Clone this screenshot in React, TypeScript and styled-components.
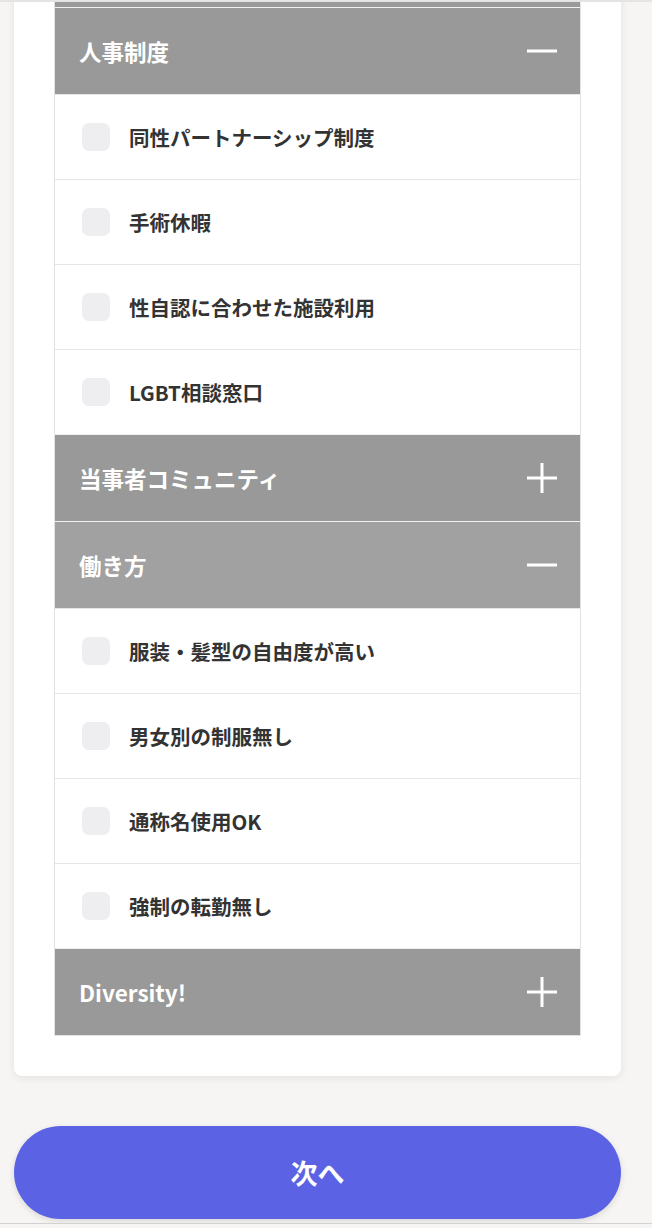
import React, {FC, useState} from 'react';
import styled, {createGlobalStyle} from 'styled-components';

interface ICategory {
    id: string
    title: string
    items: string[]
    open: boolean
    active?: boolean
}

// the first category sits above the scrolled viewport, only its bottom edge shows
const categories: ICategory[] = [
    {id: 'previous', title: '', items: [], open: false},
    {
        id: 'hr',
        title: '人事制度',
        items: ['同性パートナーシップ制度', '手術休暇', '性自認に合わせた施設利用', 'LGBT相談窓口'],
        open: true
    },
    {id: 'community', title: '当事者コミュニティ', items: [], open: false},
    {
        id: 'work',
        title: '働き方',
        items: ['服装・髪型の自由度が高い', '男女別の制服無し', '通称名使用OK', '強制の転勤無し'],
        open: true,
        active: true
    },
    {id: 'diversity', title: 'Diversity!', items: [], open: false},
]

const GlobalStyle = createGlobalStyle`
  body {
    margin: 0;
    background: #f6f5f3;
    font-family: "Noto Sans CJK JP", "Noto Sans", sans-serif;
  }
`

const ToggleIcon: FC<{ open: boolean }> = ({open}) => (
    <svg width="30" height="30" viewBox="0 0 30 30">
        <line x1="0" y1="15" x2="30" y2="15" stroke="#fff" strokeWidth="3"/>
        {!open && <line x1="15" y1="0" x2="15" y2="30" stroke="#fff" strokeWidth="3"/>}
    </svg>
)

const Category: FC<{ category: ICategory }> = ({category}) => {
    const [checked, setChecked] = useState<string[]>([])

    const toggle = (item: string) => {
        setChecked(prev => prev.includes(item) ? prev.filter(el => el !== item) : [...prev, item])
    }

    return (
        <>
            <Header active={!!category.active}>
                <HeaderTitle>{category.title}</HeaderTitle>
                <ToggleIcon open={category.open}/>
            </Header>
            {category.open && category.items.map(item => (
                <Row key={item} onClick={() => toggle(item)}>
                    <Check checked={checked.includes(item)}/>
                    <Label>{item}</Label>
                </Row>
            ))}
        </>
    )
}

const App: FC = () => {
    return (
        <>
            <GlobalStyle/>
            <TopEdge/>
            <Page>
                <Card>
                    <List>
                        {categories.map(category => <Category key={category.id} category={category}/>)}
                    </List>
                </Card>
                <NextButton>次へ</NextButton>
            </Page>
            <BottomEdge/>
        </>
    )
}

export default App;

const Page = styled.div`
  margin-top: -120px;
  padding: 0 31px 40px 14px;
  display: flex;
  flex-direction: column;
`
const Card = styled.div`
  background: #fff;
  border-radius: 8px;
  padding: 40px;
  box-shadow: 0 2px 8px rgba(0, 0, 0, 0.08);
`
const List = styled.div`
  display: flex;
  flex-direction: column;
  border-left: 1px solid #e2e2e2;
  border-right: 1px solid #e2e2e2;
  border-bottom: 1px solid #e2e2e2;
`
const Header = styled.div<{ active: boolean }>`
  box-sizing: border-box;
  height: 87px;
  border-top: 1px solid #f0f0f0;
  background: ${({active}) => active ? '#a1a1a1' : '#999999'};
  display: flex;
  align-items: center;
  justify-content: space-between;
  padding: 0 23px 0 24px;
  cursor: pointer;
`
const HeaderTitle = styled.div`
  color: #fff;
  font-size: 22.5px;
  font-weight: 600;
  line-height: 1;
`
const Row = styled.div`
  box-sizing: border-box;
  height: 85px;
  border-top: 1px solid #e6e6e6;
  background: #fff;
  display: flex;
  align-items: center;
  gap: 19px;
  padding-left: 27px;
  cursor: pointer;
`
const Check = styled.div<{ checked: boolean }>`
  width: 28px;
  height: 28px;
  border-radius: 7px;
  background: ${({checked}) => checked ? '#5b63e4' : '#eeeef1'};
`
const Label = styled.div`
  color: #333;
  font-size: 20.5px;
  font-weight: 700;
  line-height: 1;
`
const NextButton = styled.button`
  margin-top: 50px;
  height: 93px;
  border: none;
  border-radius: 47px;
  background: #5b63e4;
  color: #fff;
  font-family: "Noto Sans CJK JP", sans-serif;
  font-size: 27px;
  font-weight: 700;
  box-shadow: 0 2px 6px rgba(0, 0, 0, 0.12);
  cursor: pointer;
`
const TopEdge = styled.div`
  position: fixed;
  top: 0;
  left: 0;
  right: 0;
  height: 2px;
  background: #e4e4e4;
  z-index: 2;
`
const BottomEdge = styled.div`
  position: fixed;
  bottom: 0;
  left: 0;
  right: 0;
  height: 4px;
  border-top: 1px solid #d2d2d2;
  background: #f6f5f3;
  z-index: 2;
`
